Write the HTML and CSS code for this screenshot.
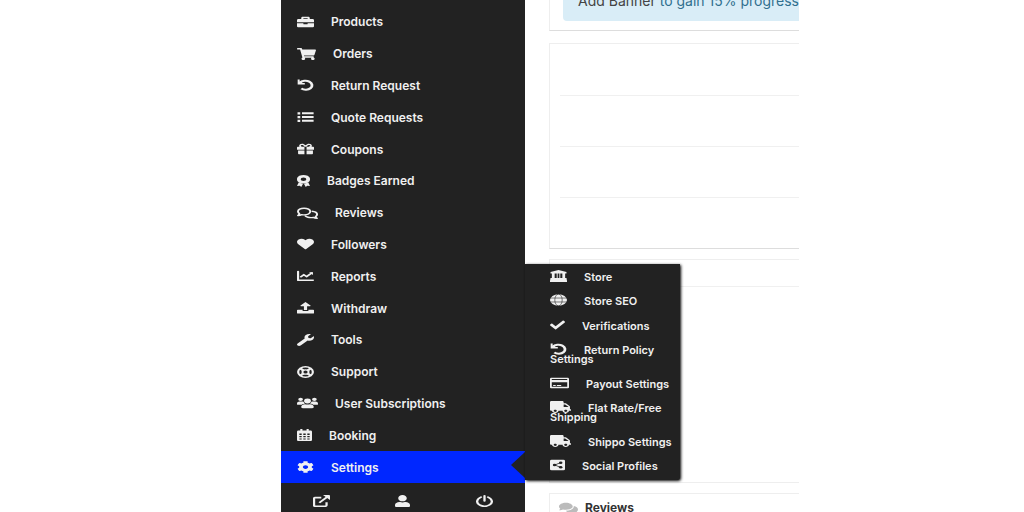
FILE: index.html
```html
<!DOCTYPE html>
<html lang="en">
<head>
<meta charset="utf-8">
<title>Vendor dashboard</title>
<link rel="stylesheet" href="styles.css">
</head>
<body>
<svg class="sprite" aria-hidden="true">
  <symbol id="briefcase" viewBox="0 0 512 512" preserveAspectRatio="none"><path d="M320 336c0 8.840-7.160 16-16 16h-96c-8.840 0-16-7.160-16-16v-32H0v128c0 25.600 22.400 48 48 48h416c25.600 0 48-22.400 48-48V304H320v32zm144-208h-80V80c0-25.600-22.400-48-48-48H176c-25.600 0-48 22.400-48 48v48H48c-25.600 0-48 22.400-48 48v92h512v-92c0-25.600-22.400-48-48-48zm-144 0H192V92h128v36z"/></symbol>
  <symbol id="cart" viewBox="0 0 576 512" preserveAspectRatio="none"><path d="M528 301l47-208C579 78 567 64 552 64H159l-9-45C148 8 138 0 127 0H24C11 0 0 11 0 24v16c0 13 11 24 24 24h70l70 343C147 417 136 435 136 456c0 31 25 56 56 56s56-25 56-56c0-16-6-30-17-40h210C430 426 424 440 424 456c0 31 25 56 56 56s56-25 56-56c0-22-13-41-32-50l6-25c3-15-8-29-23-29H218l-6-32h293c11 0 21-8 23-19z"/></symbol>
  <symbol id="undo" viewBox="0 0 512 512" preserveAspectRatio="none"><path d="M20 20h60v95l55-45v96h100v64H20z"/><path d="M90 165C150 70 280 45 370 110c95 70 110 200 35 285-65 75-190 85-275 15" fill="none" stroke="currentColor" stroke-width="84"/></symbol>
  <symbol id="list" viewBox="0 0 512 512" preserveAspectRatio="none"><path d="M16 48h82v96H16zM16 208h82v96H16zM16 368h82v96H16zM150 56h350v80H150zM150 216h350v80H150zM150 376h350v80H150z"/></symbol>
  <symbol id="gift" viewBox="0 0 512 512" preserveAspectRatio="none"><path d="M32 448c0 18 14 32 32 32h160V320H32zM288 480h160c18 0 32-14 32-32V320H288zM480 160h-42c6-12 10-26 10-40 0-49-39-88-88-88-41 0-68 21-103 69C222 53 195 32 154 32c-49 0-88 39-88 88 0 14 3 28 10 40H32c-18 0-32 14-32 32v80c0 9 7 16 16 16h208V160h64v128h208c9 0 16-7 16-16v-80c0-18-14-32-32-32zm-326 0c-22 0-40-18-40-40s18-40 40-40c20 0 34 5 77 80zm206 0h-77c43-75 56-80 77-80 22 0 40 18 40 40s-18 40-40 40z"/></symbol>
  <symbol id="badge" viewBox="0 0 384 512" preserveAspectRatio="none"><path fill-rule="evenodd" d="M192 0l62 10 62 24 44 46 20 50 4 50-4 50-20 50-44 46-62 24-62 10-62-10-62-24-44-46-20-50-4-50 4-50 20-50 44-46 62-24zm0 102a84 76 0 100 152 84 76 0 000-152z"/><path d="M50 324l130 50-55 138-42-50-83 5zM334 324l-130 50 55 138 42-50 83 5z"/></symbol>
  <symbol id="comments-o" viewBox="0 0 640 512" preserveAspectRatio="none"><g fill="none" stroke="currentColor" stroke-width="60" stroke-linejoin="round"><path d="M215 50C110 50 30 112 30 195c0 35 17 66 44 91-5 35-25 60-42 78 50-2 90-22 115-39 22 6 45 9 70 9 105 0 187-60 187-139S320 50 215 50z"/><path d="M448 180c95 12 164 66 164 140 0 34-17 65-44 89 5 30 22 55 40 73-48-2-86-20-112-38-120 28-225-15-252-85"/></g></symbol>
  <symbol id="heart" viewBox="0 0 512 512" preserveAspectRatio="none"><path d="M462 63C408 16 326 24 276 76l-20 21-20-21C186 24 105 16 50 63c-63 53-66 149-10 207l193 200c13 13 33 13 46 0l193-200c56-58 53-154-10-207z"/></symbol>
  <symbol id="chart" viewBox="0 0 512 512" preserveAspectRatio="none"><path d="M32 64v370h450M120 290l85-90 80 80 160-150" fill="none" stroke="currentColor" stroke-width="66" stroke-linejoin="round" stroke-linecap="round"/><path d="M360 96h120v120z"/></symbol>
  <symbol id="upload" viewBox="0 0 512 512" preserveAspectRatio="none"><path d="M256 0l150 150c10 14 4 28-12 28h-90v166h-96V178h-90c-16 0-22-14-12-28zM24 330h145v50h174v-50h145c14 0 24 10 24 24v110c0 14-10 24-24 24H24c-14 0-24-10-24-24V354c0-14 10-24 24-24z"/></symbol>
  <symbol id="wrench" viewBox="0 0 512 512" preserveAspectRatio="none"><path d="M508 109c-2-9-14-12-20-5l-75 74-68-11-11-68 74-75c7-6 4-17-5-20-48-11-100 1-137 38-39 40-50 97-34 148L19 403c-25 25-25 65 0 90s65 25 90 0l213-213c50 17 108 6 148-34 37-37 49-90 38-137z"/></symbol>
  <symbol id="ring" viewBox="0 0 512 512" preserveAspectRatio="none"><g fill="none" stroke="currentColor"><circle cx="256" cy="256" r="222" stroke-width="66"/><circle cx="256" cy="256" r="92" stroke-width="56"/><path d="M105 105l86 86M407 105l-86 86M105 407l86-86M407 407l-86-86" stroke-width="84"/></g></symbol>
  <symbol id="users" viewBox="0 0 640 512" preserveAspectRatio="none"><circle cx="110" cy="100" r="72"/><circle cx="530" cy="100" r="72"/><circle cx="320" cy="170" r="105"/><path d="M0 280c0-50 35-86 80-86h80c18 0 34 6 46 16 4 40 16 60 36 82-50 8-80 18-96 38H24c-14 0-24-10-24-24zM640 280c0-50-35-86-80-86h-80c-18 0-34 6-46 16-4 40-16 60-36 82 50 8 80 18 96 38h122c14 0 24-10 24-24zM128 430c0-70 50-120 115-120 50 20 104 20 154 0 65 0 115 50 115 120 0 30-20 50-48 50H176c-28 0-48-20-48-50z"/></symbol>
  <symbol id="calendar" viewBox="0 0 448 512" preserveAspectRatio="none"><path fill-rule="evenodd" d="M48 64h50V0h64v64h124V0h64v64h50c26 0 48 22 48 48v352c0 26-22 48-48 48H48c-26 0-48-22-48-48V112c0-26 22-48 48-48zm22 130v60h70v-60zm118 0v60h72v-60zm120 0v60h70v-60zM70 300v56h70v-56zm118 0v56h72v-56zm120 0v56h70v-56zM70 402v50h70v-50zm118 0v50h72v-50zm120 0v50h70v-50z"/></symbol>
  <symbol id="cog" viewBox="0 0 512 512" preserveAspectRatio="none"><path d="M487 316l-42-25c4-23 4-47 0-70l42-25c5-3 8-8 6-14-11-35-30-68-55-94-4-4-10-5-15-3l-42 25c-18-15-39-27-61-35V26c0-6-4-11-9-12-37-8-75-8-110 0-5 1-9 6-9 12v49c-22 8-43 20-61 35L89 86c-5-3-11-2-15 2-25 27-44 59-55 94-2 6 1 12 6 14l42 25c-4 23-4 47 0 70l-42 25c-5 3-8 8-6 14 11 35 30 68 55 94 4 4 10 5 15 3l42-25c18 15 39 27 61 35v49c0 6 4 11 9 12 37 8 75 8 110 0 5-1 9-6 9-12v-49c22-8 43-20 61-35l42 25c5 3 11 2 15-3 25-26 44-58 55-94 2-5-1-11-6-14zM256 336c-44 0-80-36-80-80s36-80 80-80 80 36 80 80-36 80-80 80z"/></symbol>
  <symbol id="external" viewBox="0 0 512 512" preserveAspectRatio="none"><path d="M250 110H70c-22 0-38 16-38 38v294c0 22 16 38 38 38h300c22 0 38-16 38-38V310M190 330L420 90" fill="none" stroke="currentColor" stroke-width="68"/><path d="M300 0h188c14 0 24 10 24 24v190z"/></symbol>
  <symbol id="user" viewBox="0 0 448 512" preserveAspectRatio="none"><path d="M224 270c71 0 128-60 128-135S295 0 224 0 96 60 96 135s57 135 128 135zm90 32h-17c-45 21-100 21-146 0h-17C60 302 0 360 0 430v34c0 27 22 48 48 48h352c27 0 48-21 48-48v-34c0-70-60-128-134-128z"/></symbol>
  <symbol id="power" viewBox="0 0 512 512" preserveAspectRatio="none"><path d="M150 90C10 170 0 340 106 425c90 70 210 70 300 0C512 340 502 170 362 90M256 36v220" fill="none" stroke="currentColor" stroke-width="70" stroke-linecap="round"/></symbol>
  <symbol id="bank" viewBox="0 0 512 512" preserveAspectRatio="none"><path d="M256 0l240 84v60H16V84zM56 150h84v190h62V150h28v190h52V150h28v190h62V150h84v190h24c14 0 24 12 24 26v70h8v76H0v-76h8v-70c0-14 10-26 24-26h24z"/></symbol>
  <symbol id="globe" viewBox="0 0 496 512" preserveAspectRatio="none"><circle cx="248" cy="256" r="248"/><g fill="none" stroke="#222" stroke-width="20"><ellipse cx="248" cy="256" rx="108" ry="248"/><path d="M0 172h496M0 340h496"/></g></symbol>
  <symbol id="check" viewBox="0 0 512 512" preserveAspectRatio="none"><path d="M174 439L7 273c-10-10-10-26 0-36l37-36c10-10 26-10 36 0l112 112L432 73c10-10 26-10 36 0l37 36c10 10 10 26 0 36L210 439c-10 10-26 10-36 0z"/></symbol>
  <symbol id="card" viewBox="0 0 576 512" preserveAspectRatio="none"><path fill-rule="evenodd" d="M48 32h480c27 0 48 21 48 48v352c0 27-21 48-48 48H48c-27 0-48-21-48-48V80c0-27 21-48 48-48zm6 54v46h468V86zm0 142v188h468V228zm42 110h78v46H96zm110 0h134v46H206z"/></symbol>
  <symbol id="truck" viewBox="0 0 640 512" preserveAspectRatio="none"><path d="M624 352h-16V244c0-13-5-25-14-34L494 110c-9-9-21-14-34-14h-44V48c0-27-22-48-48-48H48C22 0 0 22 0 48v320c0 27 22 48 48 48h16c0 53 43 96 96 96s96-43 96-96h128c0 53 43 96 96 96s96-43 96-96h48c9 0 16-7 16-16v-32c0-9-7-16-16-16zM160 464c-27 0-48-22-48-48s21-48 48-48 48 22 48 48-21 48-48 48zm320 0c-27 0-48-22-48-48s21-48 48-48 48 22 48 48-21 48-48 48zm80-208H416V144h44l100 100z"/></symbol>
  <symbol id="share" viewBox="0 0 448 512" preserveAspectRatio="none"><rect y="32" width="448" height="448" rx="48"/><path d="M320 160L136 256l184 96" fill="none" stroke="#222" stroke-width="36"/><g fill="#222"><circle cx="320" cy="160" r="52"/><circle cx="136" cy="256" r="52"/><circle cx="320" cy="352" r="52"/></g></symbol>
  <symbol id="comments" viewBox="0 0 576 512" preserveAspectRatio="none"><path d="M416 192c0-88-93-160-208-160S0 104 0 192c0 34 14 66 38 92-13 30-36 55-38 58 0 0-2 10 8 10 48 0 90-20 113-35 28 8 56 12 87 12 115 0 208-60 208-137z"/><path d="M538 412c24-26 38-58 38-92 0-67-53-124-129-148 16 112-87 200-239 200 34 65 111 108 208 108 31 0 60-5 87-13 23 16 61 34 105 34 10 0 12-10 4-16-15-16-62-44-74-73z"/></symbol>
</svg>

<div class="page">
  <aside class="sidebar">
    <ul class="menu">
      <li><a href="#"><svg class="icon"><use href="#briefcase"/></svg>Products</a></li>
      <li><a href="#"><svg class="icon icon-lg"><use href="#cart"/></svg>Orders</a></li>
      <li><a href="#"><svg class="icon"><use href="#undo"/></svg>Return Request</a></li>
      <li><a href="#"><svg class="icon"><use href="#list"/></svg>Quote Requests</a></li>
      <li><a href="#"><svg class="icon"><use href="#gift"/></svg>Coupons</a></li>
      <li><a href="#"><svg class="icon icon-xs"><use href="#badge"/></svg>Badges Earned</a></li>
      <li><a href="#"><svg class="icon icon-xl"><use href="#comments-o"/></svg>Reviews</a></li>
      <li><a href="#"><svg class="icon"><use href="#heart"/></svg>Followers</a></li>
      <li><a href="#"><svg class="icon"><use href="#chart"/></svg>Reports</a></li>
      <li><a href="#"><svg class="icon"><use href="#upload"/></svg>Withdraw</a></li>
      <li><a href="#"><svg class="icon"><use href="#wrench"/></svg>Tools</a></li>
      <li><a href="#"><svg class="icon"><use href="#ring"/></svg>Support</a></li>
      <li><a href="#"><svg class="icon icon-xl"><use href="#users"/></svg>User Subscriptions</a></li>
      <li><a href="#"><svg class="icon icon-sm"><use href="#calendar"/></svg>Booking</a></li>
      <li class="active">
        <a href="#"><svg class="icon"><use href="#cog"/></svg>Settings</a>
        <ul class="submenu">
          <li><a href="#"><svg class="icon"><use href="#bank"/></svg>Store</a></li>
          <li><a href="#"><svg class="icon"><use href="#globe"/></svg>Store SEO</a></li>
          <li><a href="#"><svg class="icon icon-sm"><use href="#check"/></svg>Verifications</a></li>
          <li><a href="#"><svg class="icon"><use href="#undo"/></svg>Return Policy Settings</a></li>
          <li><a href="#"><svg class="icon icon-lg"><use href="#card"/></svg>Payout Settings</a></li>
          <li><a href="#"><svg class="icon icon-xl"><use href="#truck"/></svg>Flat Rate/Free Shipping</a></li>
          <li><a href="#"><svg class="icon icon-xl"><use href="#truck"/></svg>Shippo Settings</a></li>
          <li><a href="#"><svg class="icon icon-sm"><use href="#share"/></svg>Social Profiles</a></li>
        </ul>
      </li>
    </ul>
    <nav class="quick" aria-label="Account">
      <a href="#" aria-label="Visit store"><svg class="icon"><use href="#external"/></svg></a>
      <a href="#" aria-label="Edit account"><svg class="icon icon-sm"><use href="#user"/></svg></a>
      <a href="#" aria-label="Log out"><svg class="icon"><use href="#power"/></svg></a>
    </nav>
  </aside>

  <main class="content">
    <section class="card notice">
      <p class="alert"><a href="#">Add Banner</a> to gain 15% progress</p>
    </section>
    <section class="card stats">
      <div></div><div></div><div></div><div></div>
    </section>
    <section class="card chart">
      <header></header>
    </section>
    <section class="card reviews">
      <h2><svg class="icon icon-lg"><use href="#comments"/></svg>Reviews</h2>
    </section>
  </main>
</div>
</body>
</html>
```
FILE: styles.css
```css
* {
  box-sizing: border-box;
}

body {
  margin: 0;
  background: #fff;
  color: #333;
  font-family: Inter, Roboto, sans-serif;
  font-size: 12px;
  overflow: hidden;
}

ul {
  margin: 0;
  padding: 0;
  list-style: none;
}

a {
  color: inherit;
  text-decoration: none;
}

.sprite {
  display: none;
}

.page {
  display: grid;
  grid-template-columns: 244px 1fr;
  height: 100vh;
  margin: 0 22% 0 281px;
}

.icon {
  flex: none;
  width: 17px;
  height: 12px;
  fill: currentColor;
}

.icon-xs { width: 13px; }
.icon-sm { width: 15px; }
.icon-lg { width: 19px; }
.icon-xl { width: 21px; }

.sidebar {
  display: flex;
  flex-direction: column;
  min-height: 0;
  padding-top: 6px;
  background: #222;
  color: #f0f0f0;
  font-weight: 600;
}

.menu {
  flex: 1;
  display: grid;
  grid-auto-rows: 1fr;
}

.menu > li {
  position: relative;
  display: flex;
}

.menu > li > a {
  flex: 1;
  display: flex;
  align-items: center;
  gap: 17px;
  padding-left: 16px;
}

.menu > .active {
  background: #0027ff;
}

.active::after {
  content: "";
  position: absolute;
  right: 0;
  top: 1px;
  border: solid transparent;
  border-width: 13px 14px 13px 0;
  border-right-color: #222;
}

.submenu {
  position: absolute;
  z-index: 2;
  left: 100%;
  bottom: 3px;
  display: flex;
  flex-direction: column;
  justify-content: space-between;
  width: 155px;
  height: 216px;
  padding: 9px 0 9px 25px;
  background: #222;
  border-radius: 0 0 3px 0;
  box-shadow: 1px 1px 3px #000;
  font-size: 11px;
  line-height: 9px;
}

.submenu a {
  display: block;
}

.submenu .icon {
  margin: -5px 17px -1px 0;
  vertical-align: middle;
}

.quick {
  display: grid;
  grid-template-columns: repeat(3, 1fr);
  justify-items: center;
  padding: 12px 0 5px;
}

.quick a {
  display: flex;
}

.content {
  display: flex;
  flex-direction: column;
  gap: 10px;
  min-width: 0;
  padding-left: 24px;
  overflow: hidden;
}

.card {
  flex: none;
  border: 1px solid #eee;
  border-right: 0;
}

.notice {
  margin-bottom: 2px;
  padding: 0 0 9px 13px;
  border-top: 0;
  border-bottom-color: #ddd;
}

.alert {
  height: 21px;
  margin: 0;
  padding-left: 15px;
  background: #d9edf7;
  border-radius: 0 0 0 4px;
  color: #31708f;
  font-size: 14px;
  line-height: 1px;
  white-space: nowrap;
}

.alert a {
  color: #444;
}

.stats {
  padding-left: 10px;
  border-bottom-color: #ddd;
}

.stats div {
  height: 51px;
}

.stats div + div {
  border-top: 1px solid #f0f0f0;
}

.chart {
  height: 224px;
}

.chart header {
  height: 27px;
  border-bottom: 1px solid #f0f0f0;
}

.reviews {
  padding: 6px 0 6px 9px;
}

.reviews h2 {
  display: flex;
  align-items: center;
  gap: 7px;
  margin: 0;
  font-size: 12px;
  font-weight: 700;
  line-height: 16px;
}

.reviews .icon {
  color: #bbb;
}
```
